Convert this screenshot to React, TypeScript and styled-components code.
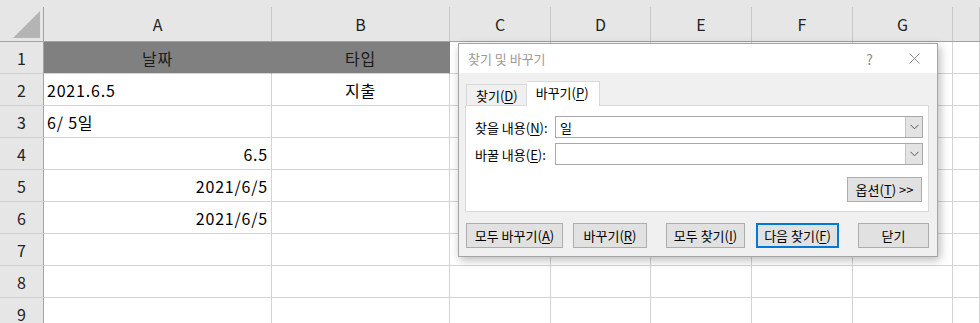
import styled, { createGlobalStyle } from "styled-components";

const GlobalStyle = createGlobalStyle`
	html, body {
		margin: 0;
		padding: 0;
		background: #ffffff;
		overflow: hidden;
	}
	body {
		font-family: "Noto Sans CJK KR", "Noto Sans", sans-serif;
	}
	* {
		box-sizing: border-box;
	}
`;

// last entry is the partly visible column H (no label shown)
const COLUMNS = ["A", "B", "C", "D", "E", "F", "G", ""];
const WIDTHS = [228, 178, 101, 100, 101, 101, 100];

type CellData = { text?: string; align?: "left" | "center" | "right"; fill?: boolean };

const ROWS: CellData[][] = [
	[{ text: "날짜", align: "center", fill: true }, { text: "타입", align: "center", fill: true }],
	[{ text: "2021.6.5" }, { text: "지출", align: "center" }],
	[{ text: "6/ 5일" }, {}],
	[{ text: "6.5", align: "right" }, {}],
	[{ text: "2021/6/5", align: "right" }, {}],
	[{ text: "2021/6/5", align: "right" }, {}],
	[{}, {}],
	[{}, {}],
	[{}, {}],
];

const Sheet = styled.div`
	position: relative;
	width: 980px;
	height: 323px;
	overflow: hidden;
	background: #ffffff;
`;

const Grid = styled.div`
	display: grid;
	grid-template-columns: 44px ${WIDTHS.map((w) => `${w}px`).join(" ")} 1fr;
	grid-template-rows: 42px;
	grid-auto-rows: 32px;
`;

const Corner = styled.div`
	background: #e6e6e6;
	border-bottom: 1px solid #a2a2a2;
	padding-top: 7px;
`;

const CornerInner = styled.div`
	height: 100%;
	border-right: 1px solid #a2a2a2;
	display: flex;
	align-items: flex-end;
	justify-content: flex-end;
	padding: 0 3px 3px 0;
`;

const ColHeader = styled.div`
	background: #e6e6e6;
	border-bottom: 1px solid #a2a2a2;
	padding-top: 7px;
`;

const ColLabel = styled.div`
	height: 100%;
	border-right: 1px solid #c8c8c8;
	display: flex;
	align-items: center;
	justify-content: center;
	font-size: 16px;
	color: #222;
	padding-bottom: 1px;
`;

const RowHeader = styled.div`
	background: #e6e6e6;
	border-right: 1px solid #a2a2a2;
	border-bottom: 1px solid #d0d0d0;
	display: flex;
	align-items: center;
	justify-content: center;
	font-size: 16px;
	color: #222;
`;

const Cell = styled.div<{ $align: string; $fill?: boolean }>`
	background: ${(p) => (p.$fill ? "#808080" : "#ffffff")};
	border-right: 1px solid ${(p) => (p.$fill ? "#808080" : "#d4d4d4")};
	border-bottom: 1px solid #d4d4d4;
	display: flex;
	align-items: center;
	justify-content: ${(p) =>
		p.$align === "center" ? "center" : p.$align === "right" ? "flex-end" : "flex-start"};
	padding: 0 3px 0 3px;
	font-size: 16px;
	letter-spacing: 0.8px;
	color: ${(p) => (p.$fill ? "#1a1a1a" : "#000")};
	white-space: nowrap;
	overflow: hidden;
`;

/* ---------- dialog ---------- */

const Dialog = styled.div`
	position: absolute;
	left: 458px;
	top: 43px;
	width: 480px;
	height: 214px;
	border: 1px solid #a5a5a5;
	background: #f0f0f0;
	box-shadow: 2px 3px 9px rgba(0, 0, 0, 0.28);
	display: flex;
	flex-direction: column;
	font-size: 13px;
	color: #000;
`;

const TitleBar = styled.div`
	height: 29px;
	background: #ffffff;
	display: flex;
	align-items: center;
	padding-left: 9px;
	flex-shrink: 0;
`;

const Title = styled.div`
	flex: 1;
	color: #9b9b9b;
	font-size: 13px;
`;

const TitleButton = styled.div`
	width: 45px;
	height: 29px;
	display: flex;
	align-items: center;
	justify-content: center;
	color: #8c8c8c;
	font-size: 14px;
`;

const Body = styled.div`
	flex: 1;
	padding: 8px 8px 0 6px;
	display: flex;
	flex-direction: column;
`;

const TabRow = styled.div`
	display: flex;
	align-items: flex-end;
	height: 24px;
	padding-left: 1px;
	position: relative;
	z-index: 1;
`;

const Tab = styled.div<{ $active?: boolean }>`
	height: ${(p) => (p.$active ? "25px" : "21px")};
	margin-bottom: ${(p) => (p.$active ? "-1px" : "0")};
	padding: ${(p) => (p.$active ? "0 10px 3px 9px" : "0 8px 0 9px")};
	background: ${(p) => (p.$active ? "#ffffff" : "#f0f0f0")};
	border: 1px solid #d9d9d9;
	border-bottom: none;
	border-left: ${(p) => (p.$active ? "none" : "1px solid #d9d9d9")};
	display: flex;
	align-items: center;
	font-size: 13px;
`;

const Panel = styled.div`
	height: 107px;
	background: #ffffff;
	border: 1px solid #d9d9d9;
	padding: 10px 5px 0 9px;
	display: flex;
	flex-direction: column;
	gap: 5px;
`;

const FieldRow = styled.div`
	display: grid;
	grid-template-columns: 80px 1fr;
	align-items: center;
	height: 22px;
`;

const Combo = styled.div`
	height: 22px;
	border: 1px solid #a8a8a8;
	display: flex;
	align-items: stretch;
	background: #ffffff;
`;

const ComboText = styled.div`
	flex: 1;
	padding-left: 4px;
	display: flex;
	align-items: center;
	font-size: 13px;
`;

const ComboArrow = styled.div`
	width: 17px;
	background: #e3e3e3;
	border-left: 1px solid #c4c4c4;
	display: flex;
	align-items: center;
	justify-content: center;
`;

const OptionsRow = styled.div`
	display: flex;
	justify-content: flex-end;
	padding: 7px 1px 0 0;
`;

const Button = styled.div<{ $w: number; $default?: boolean }>`
	width: ${(p) => p.$w}px;
	height: 25px;
	background: #e1e1e1;
	border: ${(p) => (p.$default ? "2px solid #0078d7" : "1px solid #adadad")};
	display: flex;
	align-items: center;
	justify-content: center;
	font-size: 13px;
	white-space: nowrap;
`;

const ButtonBar = styled.div`
	display: flex;
	gap: 19px;
	margin-top: 11px;
	padding-left: 1px;
`;

const ButtonGroup = styled.div<{ $gap: number }>`
	display: flex;
	gap: ${(p) => p.$gap}px;
`;

const Key = styled.u`
	text-underline-offset: 2px;
`;

function Chevron() {
	return (
		<svg width="9" height="6" viewBox="0 0 9 6">
			<path d="M0.5 0.8 L4.5 4.8 L8.5 0.8" fill="none" stroke="#555" strokeWidth="1" />
		</svg>
	);
}

function FindReplaceDialog() {
	return (
		<Dialog>
			<TitleBar>
				<Title>찾기 및 바꾸기</Title>
				<TitleButton>?</TitleButton>
				<TitleButton>
					<svg width="11" height="11" viewBox="0 0 11 11">
						<path d="M0.5 0.5 L10.5 10.5 M10.5 0.5 L0.5 10.5" stroke="#8a8a8a" strokeWidth="1" />
					</svg>
				</TitleButton>
			</TitleBar>
			<Body>
				<TabRow>
					<Tab>
						찾기(<Key>D</Key>)
					</Tab>
					<Tab $active>
						바꾸기(<Key>P</Key>)
					</Tab>
				</TabRow>
				<Panel>
					<FieldRow>
						<span>
							찾을 내용(<Key>N</Key>):
						</span>
						<Combo>
							<ComboText>일</ComboText>
							<ComboArrow>
								<Chevron />
							</ComboArrow>
						</Combo>
					</FieldRow>
					<FieldRow>
						<span>
							바꿀 내용(<Key>E</Key>):
						</span>
						<Combo>
							<ComboText />
							<ComboArrow>
								<Chevron />
							</ComboArrow>
						</Combo>
					</FieldRow>
					<OptionsRow>
						<Button $w={75}>
							옵션(<Key>T</Key>) &gt;&gt;
						</Button>
					</OptionsRow>
				</Panel>
				<ButtonBar>
					<ButtonGroup $gap={10}>
						<Button $w={97}>
							모두 바꾸기(<Key>A</Key>)
						</Button>
						<Button $w={74}>
							바꾸기(<Key>R</Key>)
						</Button>
					</ButtonGroup>
					<ButtonGroup $gap={11}>
						<Button $w={79}>
							모두 찾기(<Key>I</Key>)
						</Button>
						<Button $w={83} $default>
							다음 찾기(<Key>F</Key>)
						</Button>
					</ButtonGroup>
					<Button $w={74}>닫기</Button>
				</ButtonBar>
			</Body>
		</Dialog>
	);
}

export default function App() {
	return (
		<>
			<GlobalStyle />
			<Sheet>
				<Grid>
					<Corner>
						<CornerInner>
							<svg width="27" height="27" viewBox="0 0 27 27">
								<polygon points="0,27 27,27 27,0" fill="#b4b4b4" />
							</svg>
						</CornerInner>
					</Corner>
					{COLUMNS.map((c, i) => (
						<ColHeader key={`h${i}`}>
							<ColLabel>{c}</ColLabel>
						</ColHeader>
					))}
					{ROWS.map((row, r) => [
						<RowHeader key={`r${r}`}>{r + 1}</RowHeader>,
						...COLUMNS.map((_, c) => {
							const d = row[c] ?? {};
							return (
								<Cell key={`c${r}-${c}`} $align={d.align ?? "left"} $fill={d.fill}>
									{d.text}
								</Cell>
							);
						}),
					])}
				</Grid>
				<FindReplaceDialog />
			</Sheet>
		</>
	);
}
